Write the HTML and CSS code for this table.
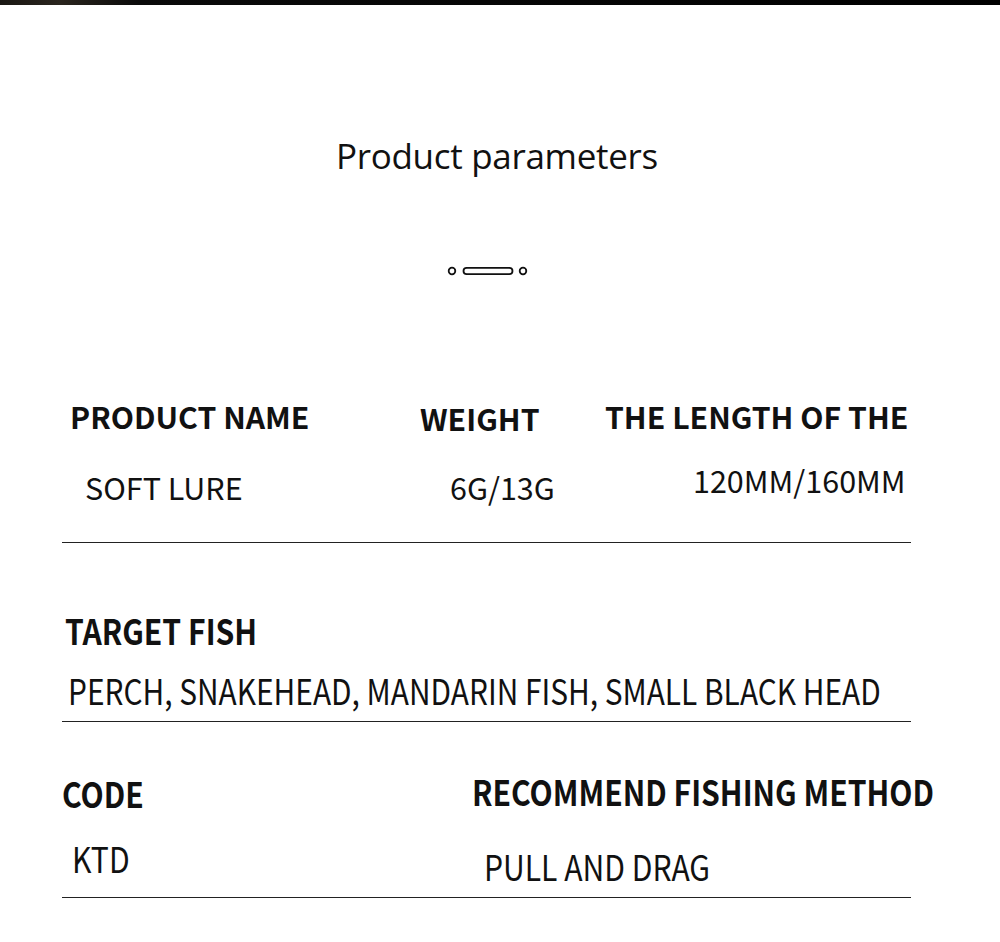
FILE: index.html
```html
<!DOCTYPE html>
<html>
<head>
<meta charset="utf-8">
<link rel="stylesheet" href="styles.css">
</head>
<body>
<div class="topbar"></div>
<h1 class="title">Product parameters</h1>
<div class="ornament">
  <svg width="85" height="14" viewBox="0 0 85 14">
    <circle cx="7" cy="7" r="3.3" fill="none" stroke="#111" stroke-width="1.8"/>
    <rect x="18.5" y="3.8" width="49" height="6.4" rx="3.2" fill="none" stroke="#111" stroke-width="1.8"/>
    <circle cx="78" cy="7" r="3.3" fill="none" stroke="#111" stroke-width="1.8"/>
  </svg>
</div>

<section class="row1">
  <div class="cells">
    <div class="cell c-name">
      <div class="head">PRODUCT NAME</div>
      <div class="val">SOFT LURE</div>
    </div>
    <div class="cell c-weight">
      <div class="head">WEIGHT</div>
      <div class="val">6G/13G</div>
    </div>
    <div class="cell c-length">
      <div class="head">THE LENGTH OF THE</div>
      <div class="val">120MM/160MM</div>
    </div>
  </div>
  <div class="rule"></div>
</section>

<section class="row2">
  <div class="chead"><span class="cond">TARGET FISH</span></div>
  <div class="cval"><span class="cond narrow">PERCH, SNAKEHEAD, MANDARIN FISH, SMALL BLACK HEAD</span></div>
  <div class="rule"></div>
</section>

<section class="row3">
  <div class="cells">
    <div class="cell c-code">
      <div class="chead"><span class="cond">CODE</span></div>
      <div class="cval"><span class="cond">KTD</span></div>
    </div>
    <div class="cell c-method">
      <div class="chead"><span class="cond">RECOMMEND FISHING METHOD</span></div>
      <div class="cval"><span class="cond">PULL AND DRAG</span></div>
    </div>
  </div>
  <div class="rule"></div>
</section>
</body>
</html>
```

FILE: styles.css
```css
html, body {
  margin: 0;
  padding: 0;
  background: #fff;
}
body {
  width: 1000px;
  height: 942px;
  overflow: hidden;
  font-family: "Noto Sans CJK SC", "Noto Sans", sans-serif;
  color: #111;
}
.topbar {
  height: 5px;
  background: linear-gradient(90deg, #1a1713 0%, #2a251e 6%, #0a0a0a 14%, #000 100%);
}
.title {
  margin: 126px 0 0;
  text-align: center;
  font-family: "Open Sans", "Noto Sans", sans-serif;
  font-weight: 400;
  font-size: 35px;
  letter-spacing: -0.3px;
  line-height: 50px;
  color: #111;
  padding-right: 6px;
}
.ornament {
  display: flex;
  justify-content: center;
  margin-top: 83px;
}
.ornament svg {
  display: block;
  margin-left: -26px;
}
.head {
  font-weight: 700;
  font-size: 30.2px;
  line-height: 40px;
  white-space: nowrap;
}
.val {
  font-weight: 400;
  font-size: 30.5px;
  line-height: 40px;
  white-space: nowrap;
}
.chead, .cval {
  font-size: 35px;
  line-height: 44px;
  white-space: nowrap;
}
.chead { font-weight: 700; }
.cval { font-weight: 400; }
.cond {
  display: inline-block;
  transform: scaleX(0.86);
  transform-origin: left center;
}
.cond.narrow {
  transform: scaleX(0.853);
}
.rule {
  height: 1px;
  background: #222;
  margin-left: 62px;
  width: 849px;
}
.cells {
  display: flex;
}
.cell {
  flex-shrink: 0;
}
.row1 {
  margin-top: 118px;
}
.c-name { width: 350px; padding-left: 70px; }
.c-name .val { padding-left: 15px; margin-top: 31px; }
.c-weight { width: 185px; margin-top: 2px; }
.c-weight .val { padding-left: 30px; margin-top: 29px; }
.c-length .val { padding-left: 88px; margin-top: 24px; }
.row1 .rule { margin-top: 35px; }

.row2 { margin-top: 65px; }
.row2 .chead { padding-left: 65px; }
.row2 .cval { padding-left: 68px; margin-top: 16px; }
.row2 .rule { margin-top: 9px; }

.row3 { margin-top: 47px; }
.c-code { width: 410px; padding-left: 62px; margin-top: 2px; }
.c-code .cval { padding-left: 10px; margin-top: 21px; }
.c-method .cval { padding-left: 12px; margin-top: 31px; }
.row3 .rule { margin-top: 9px; }
```
